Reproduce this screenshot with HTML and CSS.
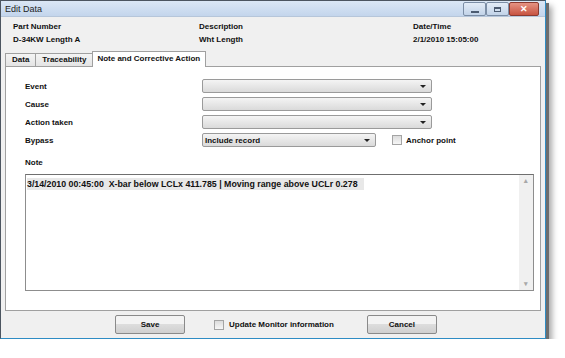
FILE: index.html
```html
<!DOCTYPE html>
<html lang="en">
<head>
    <meta charset="UTF-8">
    <title>Edit Data</title>
    <link rel="stylesheet" href="styles.css">
</head>
<body>
    <div class="window">
        <div class="titlebar">
            <span class="title">Edit Data</span>
            <div class="caption-btns">
                <span class="cap min"><i></i></span>
                <span class="cap max"><i></i></span>
                <span class="cap close">&#x2715;</span>
            </div>
        </div>
        <div class="client">
            <div class="info">
                <div class="info-col c1">
                    <div>Part Number</div>
                    <div>D-34KW Length A</div>
                </div>
                <div class="info-col c2">
                    <div>Description</div>
                    <div>Wht Length</div>
                </div>
                <div class="info-col">
                    <div>Date/Time</div>
                    <div>2/1/2010 15:05:00</div>
                </div>
            </div>

            <div class="tabs">
                <span class="tab">Data</span>
                <span class="tab">Traceability</span>
                <span class="tab active">Note and Corrective Action</span>
            </div>
            <div class="panel">
                <div class="fields">
                    <label>Event</label>
                    <div class="combo wide"><span></span><b></b></div>
                    <label>Cause</label>
                    <div class="combo wide"><span></span><b></b></div>
                    <label>Action taken</label>
                    <div class="combo wide"><span></span><b></b></div>
                    <label>Bypass</label>
                    <div class="bypass-row">
                        <div class="combo short"><span>Include record</span><b></b></div>
                        <span class="check"></span>
                        <span class="check-label">Anchor point</span>
                    </div>
                </div>
                <div class="note-label">Note</div>
                <div class="note">
                    <div class="note-text"><span class="sel">3/14/2010 00:45:00&nbsp; X-bar below LCLx 411.785 | Moving range above UCLr 0.278</span></div>
                    <div class="scroll">
                        <span class="arr">&#x25B4;</span>
                        <span class="arr">&#x25BE;</span>
                    </div>
                </div>
            </div>

            <div class="footer">
                <span class="btn">Save</span>
                <span class="check"></span>
                <span class="check-label">Update Monitor information</span>
                <span class="btn cancel">Cancel</span>
            </div>
        </div>
    </div>
</body>
</html>
```

FILE: styles.css
```css
* {
    box-sizing: border-box;
}
body {
    margin: 0;
    background-color: #fff;
    font-family: Tahoma, "Liberation Sans", Arial, sans-serif;
    font-size: 8px;
    font-weight: bold;
    color: #111;
}
.window {
    width: 546px;
    height: 339px;
    border: 1px solid #4c5560;
    border-right-color: #2e8cc4;
    border-bottom-color: #2e8cc4;
    box-shadow: 3px 3px 0 #6d6d6d, 6px 6px 6px rgba(0, 0, 0, 0.35);
    background-color: #f0f0f0;
    display: flex;
    flex-direction: column;
}
.titlebar {
    height: 16px;
    background: linear-gradient(#dbe7f5, #c3d5ec);
    display: flex;
    align-items: flex-start;
    justify-content: space-between;
    border-bottom: 1px solid #b6c6da;
}
.title {
    font-weight: normal;
    font-size: 9px;
    color: #1d1d1d;
    padding: 3px 0 0 4px;
}
.caption-btns {
    display: flex;
    margin: 1px 6px 0 0;
}
.cap {
    width: 23px;
    height: 14px;
    border: 1px solid #7c8ea6;
    border-radius: 2px;
    background: linear-gradient(#e3ecf7, #c2d3e8);
    display: flex;
    align-items: center;
    justify-content: center;
}
.cap.min i {
    width: 8px;
    height: 2px;
    background: #4c5b70;
    margin-top: 5px;
}
.cap.max i {
    width: 7px;
    height: 5px;
    border: 1px solid #4c5b70;
    border-top-width: 2px;
}
.cap.close {
    width: 30px;
    border-color: #8a3a30;
    background: linear-gradient(#e59383, #c75341);
    color: #fff;
    font-size: 9px;
}
.client {
    flex: 1;
    display: flex;
    flex-direction: column;
}
.info {
    display: flex;
    padding: 5px 0 0 12px;
    height: 34px;
}
.info-col {
    display: flex;
    flex-direction: column;
    gap: 4px;
}
.info-col.c1 {
    width: 186px;
}
.info-col.c2 {
    width: 214px;
}
.tabs {
    display: flex;
    align-items: flex-end;
    padding-left: 4px;
    height: 15px;
}
.tab {
    height: 13px;
    line-height: 12px;
    padding: 0 6px;
    border: 1px solid #a0a0a0;
    border-bottom: none;
    background: linear-gradient(#f4f4f4, #e4e4e4);
    margin-right: -1px;
}
.tab.active {
    height: 16px;
    line-height: 14px;
    background: #fff;
    padding: 0 5px 0 4px;
    position: relative;
    top: 1px;
}
.panel {
    height: 245px;
    margin: 0 4px;
    border: 1px solid #a0a0a0;
    background: #fff;
    padding: 12px 0 0 19px;
}
.fields {
    display: grid;
    grid-template-columns: 177px auto;
    row-gap: 4px;
    align-items: center;
}
.combo {
    height: 14px;
    border: 1px solid #9a9a9a;
    border-radius: 2px;
    background: linear-gradient(#f4f4f4, #dadada);
    display: flex;
    align-items: center;
    justify-content: space-between;
    padding: 0 5px 0 2px;
}
.combo b {
    width: 0;
    height: 0;
    border-left: 3px solid transparent;
    border-right: 3px solid transparent;
    border-top: 3px solid #222;
}
.combo.wide {
    width: 230px;
}
.combo.short {
    width: 174px;
}
.bypass-row {
    display: flex;
    align-items: center;
}
.check {
    width: 10px;
    height: 10px;
    border: 1px solid #a4a4a4;
    background: linear-gradient(#dcdcdc, #f6f6f6);
}
.bypass-row .check {
    margin-left: 16px;
}
.check-label {
    margin-left: 4px;
}
.note-label {
    margin-top: 11px;
}
.note {
    margin-top: 7px;
    width: 509px;
    height: 117px;
    border: 1px solid #8d8d8d;
    border-top-color: #6f6f6f;
    display: flex;
}
.note-text {
    flex: 1;
    padding: 4px 0 0 1px;
    font-size: 8.8px;
}
.sel {
    background: #e8e8e8;
    padding: 1px 6px 1px 0;
}
.scroll {
    width: 14px;
    background: #f0f0f0;
    display: flex;
    flex-direction: column;
    justify-content: space-between;
    align-items: center;
    padding: 2px 0;
}
.arr {
    color: #a8a8a8;
    font-size: 7px;
}
.footer {
    display: flex;
    align-items: center;
    padding: 4px 0 0 114px;
}
.btn {
    width: 70px;
    height: 19px;
    border: 1px solid #8a8a8a;
    border-radius: 2px;
    background: linear-gradient(#f3f3f3 45%, #dddddd 50%, #d0d0d0);
    display: flex;
    align-items: center;
    justify-content: center;
}
.footer .check {
    margin-left: 29px;
}
.footer .check-label {
    margin-left: 5px;
}
.btn.cancel {
    margin-left: 33px;
}
```
